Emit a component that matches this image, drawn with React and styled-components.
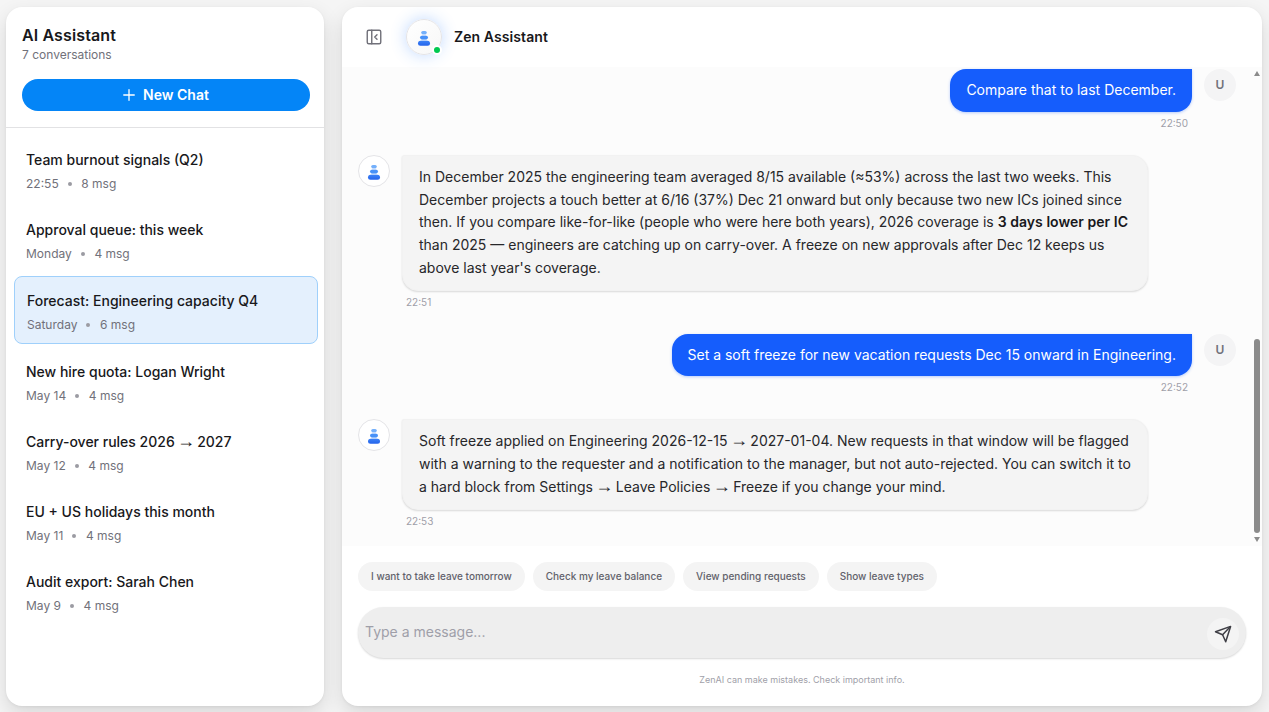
import styled, { createGlobalStyle, css } from "styled-components";
import { Plus, PanelLeftClose } from "lucide-react";

const GlobalStyle = createGlobalStyle`
    * {
        box-sizing: border-box;
    }

    body {
        margin: 0;
        background: #f5f5f5;
        color: #18181b;
        font-family: Inter, "Liberation Sans", sans-serif;
        font-size: 14px;
    }

    button,
    input {
        border: 0;
        padding: 0;
        margin: 0;
        font: inherit;
    }
`;

const Page = styled.div`
    display: flex;
    gap: 18px;
    height: 100vh;
    padding: 7px 7px 6px 6px;
    overflow: hidden;
`;

const panel = css`
    display: flex;
    flex-direction: column;
    border-radius: 16px;
    background: #fff;
    box-shadow: 0 8px 20px rgba(0, 0, 0, 0.12), 0 1px 3px rgba(0, 0, 0, 0.06);
    overflow: hidden;
`;

const Sidebar = styled.aside`
    ${panel}
    flex: 0 0 318px;
`;

const Chat = styled.main`
    ${panel}
    flex: 1;
    min-width: 0;
`;

const SidebarHeader = styled.header`
    height: 121px;
    padding: 16px 14px 0 16px;
    border-bottom: 1px solid #e2e2e4;
`;

const SidebarTitle = styled.h2`
    margin: 0;
    font-size: 16px;
    line-height: 24px;
    font-weight: 600;
    letter-spacing: 0.12px;
`;

const SidebarCount = styled.p`
    margin: 0;
    font-size: 12px;
    line-height: 16px;
    color: #71717a;
`;

const NewChat = styled.button`
    display: flex;
    align-items: center;
    justify-content: center;
    gap: 5px;
    width: 100%;
    height: 32px;
    margin-top: 16px;
    padding-right: 3px;
    border-radius: 16px;
    background: #0485f7;
    color: #fff;
    font-weight: 600;
    line-height: 20px;

    span {
        padding-bottom: 1px;
    }
`;

const Conversations = styled.div`
    display: flex;
    flex-direction: column;
    gap: 4px;
    padding: 8px 6px 8px 8px;
`;

const Conversation = styled.div`
    padding: 14px 12px 10px;
    border-radius: 8px;
    ${({ $active }) =>
        $active &&
        css`
            background: #e4f0fd;
            border: 1px solid #9fd0fb;
        `}
`;

const ConversationTitle = styled.div`
    height: 20px;
    line-height: 20px;
    font-weight: 500;
`;

const ConversationMeta = styled.div`
    display: flex;
    align-items: center;
    gap: 9px;
    margin-top: 6px;
    font-size: 12px;
    line-height: 16px;
    color: #71717a;
`;

const Dot = styled.span`
    width: 4px;
    height: 4px;
    margin-right: 0.6px;
    border-radius: 50%;
    background: #9b9ba2;
`;

const Arrow = styled.span`
    margin: 0 -1.5px;
    font-family: "Liberation Sans", sans-serif;
    font-size: 18px;
    font-weight: 400;
    line-height: 0;
`;

const ChatHeader = styled.header`
    display: flex;
    align-items: center;
    height: 60px;
    padding: 0 16px;
`;

const ToggleButton = styled.button`
    display: flex;
    align-items: center;
    justify-content: center;
    width: 32px;
    height: 32px;
    margin-right: 16px;
    background: none;
    color: #71717a;
`;

const Avatar = styled.div`
    position: relative;
    display: flex;
    flex: none;
    align-items: center;
    justify-content: center;
    width: ${({ $size }) => $size || 32}px;
    height: ${({ $size }) => $size || 32}px;
    border: 1px solid #e4e4e7;
    border-radius: 50%;
    background: #fff;
`;

const HeaderAvatar = styled(Avatar)`
    background: linear-gradient(135deg, #fff, #f7f7f7);
    box-shadow: 0 0 16px rgba(43, 127, 255, 0.3);
`;

const Online = styled.span`
    position: absolute;
    right: -1px;
    bottom: -1px;
    width: 10px;
    height: 10px;
    border: 2px solid #fff;
    border-radius: 50%;
    background: #00c950;
`;

const ChatName = styled.h1`
    margin: 0 0 0 12px;
    font-size: 14px;
    line-height: 20px;
    font-weight: 600;
    letter-spacing: 0.08px;
`;

const Thread = styled.div`
    display: flex;
    flex: none;
    height: 479px;
    background: #fcfcfc;
`;

const Messages = styled.div`
    display: flex;
    flex: 1;
    flex-direction: column;
    gap: 24px;
    padding: 2px 16px 0;
`;

const MessageRow = styled.div`
    display: flex;
    flex-direction: ${({ $mine }) => ($mine ? "row-reverse" : "row")};
    gap: 12px;
`;

const UserAvatar = styled(Avatar)`
    padding-bottom: 1px;
    border: 0;
    background: #f4f4f5;
    color: #71717a;
    font-size: 12px;
    font-weight: 600;
`;

const MessageBody = styled.div`
    display: flex;
    flex-direction: column;
    align-items: ${({ $mine }) => ($mine ? "flex-end" : "flex-start")};
    max-width: 85%;
`;

const Bubble = styled.div`
    padding: 10px 16px;
    line-height: 22.75px;
    border-radius: 16px;
    ${({ $mine }) =>
        $mine
            ? css`
                  border-top-right-radius: 0;
                  background: #155dfc;
                  color: #fff;
                  box-shadow: 0 1px 3px rgba(21, 93, 252, 0.3);
              `
            : css`
                  border: 1px solid #f2f2f2;
                  border-top-left-radius: 2px;
                  background: #f4f4f4;
                  color: #27272a;
                  box-shadow: 0 1px 2px rgba(0, 0, 0, 0.14);
              `}

    strong {
        font-weight: 600;
        letter-spacing: 0.04px;
        color: #18181b;
    }
`;

const Time = styled.time`
    margin-top: 4px;
    padding: 0 4px;
    font-size: 10px;
    line-height: 15px;
    color: #9f9fa9;
`;

const Scrollbar = styled.div`
    display: flex;
    flex-direction: column;
    align-items: center;
    flex: 0 0 10px;
    padding: 4px 0;
`;

const ScrollArrow = styled.svg`
    display: block;
    flex: none;
    width: 6px;
    height: 5px;
    fill: #8b8b8b;
`;

const Track = styled.div`
    display: flex;
    flex: 1;
    flex-direction: column;
    justify-content: flex-end;
    padding-bottom: 4px;
`;

const Thumb = styled.div`
    width: 6px;
    height: 194px;
    border-radius: 3px;
    background: #8b8b8b;
`;

const Composer = styled.footer`
    flex: 1;
    padding: 16px;
`;

const Suggestions = styled.div`
    display: flex;
    gap: 8px;
`;

const Suggestion = styled.button`
    height: 29px;
    padding: 0 13px 1px;
    border-radius: 15px;
    background: #f4f4f4;
    color: #62626b;
    font-size: 10px;
    font-weight: 500;
`;

const InputBar = styled.div`
    display: flex;
    align-items: flex-end;
    height: 51px;
    margin-top: 16px;
    padding: 0 7px 8px;
    border-radius: 26px;
    background: #eee;
    box-shadow: 0 1px 2px rgba(0, 0, 0, 0.16);
`;

const Input = styled.input`
    flex: 1;
    height: 32px;
    padding-bottom: 5px;
    background: none;
    outline: none;

    &::placeholder {
        color: #9f9fa9;
        opacity: 1;
    }
`;

const SendButton = styled.button`
    display: flex;
    align-items: center;
    justify-content: center;
    width: 32px;
    height: 32px;
    border-radius: 50%;
    background: #f4f4f4;
    color: #3f3f46;
`;

const Disclaimer = styled.p`
    margin: 15px 0 0;
    font-size: 9px;
    line-height: 14px;
    text-align: center;
    color: #9f9fa9;
`;

const conversations = [
    { title: "Team burnout signals (Q2)", when: "22:55", count: 8 },
    { title: "Approval queue: this week", when: "Monday", count: 4 },
    { title: "Forecast: Engineering capacity Q4", when: "Saturday", count: 6, active: true },
    { title: "New hire quota: Logan Wright", when: "May 14", count: 4 },
    {
        title: (
            <>
                Carry-over rules 2026 <Arrow>→</Arrow> 2027
            </>
        ),
        when: "May 12",
        count: 4,
    },
    { title: "EU + US holidays this month", when: "May 11", count: 4 },
    { title: "Audit export: Sarah Chen", when: "May 9", count: 4 },
];

const messages = [
    { mine: true, time: "22:50", text: "Compare that to last December." },
    {
        time: "22:51",
        text: (
            <>
                In December 2025 the engineering team averaged 8/15 available (≈53%) across the last
                two weeks. This December projects a touch better at 6/16 (37%) Dec 21 onward but only
                because two new ICs joined since then. If you compare like-for-like (people who were
                here both years), 2026 coverage is <strong>3 days lower per IC</strong> than 2025 —
                engineers are catching up on carry-over. A freeze on new approvals after Dec 12 keeps
                us above last year's coverage.
            </>
        ),
    },
    {
        mine: true,
        time: "22:52",
        text: "Set a soft freeze for new vacation requests Dec 15 onward in Engineering.",
    },
    {
        time: "22:53",
        text: (
            <>
                Soft freeze applied on Engineering 2026-12-15 <Arrow>→</Arrow> 2027-01-04. New
                requests in that window will be flagged with a warning to the requester and a
                notification to the manager, but not auto-rejected. You can switch it to a hard block
                from Settings <Arrow>→</Arrow> Leave Policies <Arrow>→</Arrow> Freeze if you change
                your mind.
            </>
        ),
    },
];

const suggestions = [
    "I want to take leave tomorrow",
    "Check my leave balance",
    "View pending requests",
    "Show leave types",
];

// Three stacked stones
function ZenLogo() {
    return (
        <svg width="14" height="18" viewBox="0 0 14 18">
            <defs>
                <linearGradient id="stone" x1="0" y1="0" x2="0" y2="1">
                    <stop offset="0" stopColor="#3b82f6" />
                    <stop offset="1" stopColor="#2563eb" />
                </linearGradient>
            </defs>
            <path d="M5 5H9L10 15H4Z" fill="#dbe9fe" />
            <rect x="4.2" y="3" width="5.6" height="3.2" rx="1.6" fill="#74b0fb" />
            <rect x="3" y="7.8" width="8" height="3.6" rx="1.8" fill="#4791f8" />
            <rect x="1" y="12.8" width="12" height="5" rx="2.5" fill="url(#stone)" />
        </svg>
    );
}

function SendIcon() {
    return (
        <svg
            width="18"
            height="18"
            viewBox="0 0 18 18"
            fill="none"
            stroke="currentColor"
            strokeWidth="1.5"
            strokeLinecap="round"
            strokeLinejoin="round">
            <path d="M1.5 6.8 16.6 1.4 11.7 16.7 8.6 9.8Z" />
            <path d="M8.6 9.8 16.2 1.8" />
        </svg>
    );
}

export default function App() {
    return (
        <Page>
            <GlobalStyle />
            <Sidebar>
                <SidebarHeader>
                    <SidebarTitle>AI Assistant</SidebarTitle>
                    <SidebarCount>7 conversations</SidebarCount>
                    <NewChat>
                        <Plus size={18} strokeWidth={1.75} />
                        <span>New Chat</span>
                    </NewChat>
                </SidebarHeader>
                <Conversations>
                    {conversations.map((item) => (
                        <Conversation key={item.when} $active={item.active}>
                            <ConversationTitle>{item.title}</ConversationTitle>
                            <ConversationMeta>
                                <span>{item.when}</span>
                                <Dot />
                                <span>{item.count} msg</span>
                            </ConversationMeta>
                        </Conversation>
                    ))}
                </Conversations>
            </Sidebar>
            <Chat>
                <ChatHeader>
                    <ToggleButton aria-label="Toggle conversations">
                        <PanelLeftClose size={18} strokeWidth={1.9} />
                    </ToggleButton>
                    <HeaderAvatar $size={36}>
                        <ZenLogo />
                        <Online />
                    </HeaderAvatar>
                    <ChatName>Zen Assistant</ChatName>
                </ChatHeader>
                <Thread>
                    <Messages>
                        {messages.map((message) => (
                            <MessageRow key={message.time} $mine={message.mine}>
                                {message.mine ? (
                                    <UserAvatar>U</UserAvatar>
                                ) : (
                                    <Avatar>
                                        <ZenLogo />
                                    </Avatar>
                                )}
                                <MessageBody $mine={message.mine}>
                                    <Bubble $mine={message.mine}>{message.text}</Bubble>
                                    <Time>{message.time}</Time>
                                </MessageBody>
                            </MessageRow>
                        ))}
                    </Messages>
                    <Scrollbar>
                        <ScrollArrow viewBox="0 0 6 5">
                            <path d="M3 0 6 5H0Z" />
                        </ScrollArrow>
                        <Track>
                            <Thumb />
                        </Track>
                        <ScrollArrow viewBox="0 0 6 5">
                            <path d="M3 5 6 0H0Z" />
                        </ScrollArrow>
                    </Scrollbar>
                </Thread>
                <Composer>
                    <Suggestions>
                        {suggestions.map((text) => (
                            <Suggestion key={text}>{text}</Suggestion>
                        ))}
                    </Suggestions>
                    <InputBar>
                        <Input placeholder="Type a message..." />
                        <SendButton aria-label="Send">
                            <SendIcon />
                        </SendButton>
                    </InputBar>
                    <Disclaimer>ZenAI can make mistakes. Check important info.</Disclaimer>
                </Composer>
            </Chat>
        </Page>
    );
}
